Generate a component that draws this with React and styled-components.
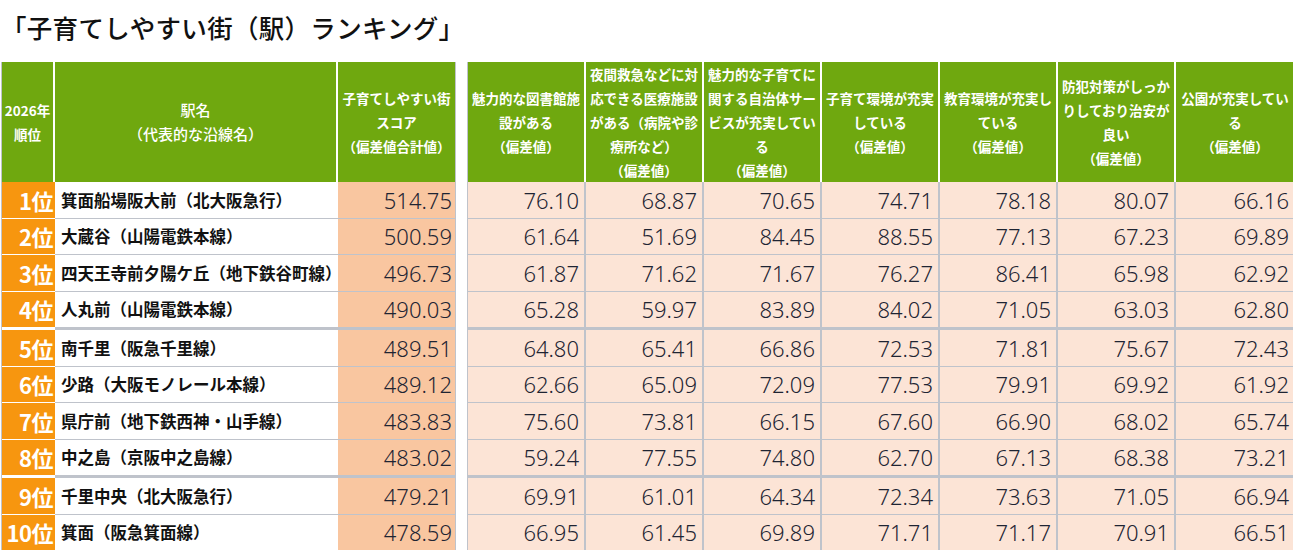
import styled, { createGlobalStyle } from 'styled-components';

const GlobalStyle = createGlobalStyle`
  body {
    margin: 0;
    background: #fff;
    font-family: "Noto Sans CJK JP", "Noto Sans", sans-serif;
  }
`;

const GREEN = '#6FA80F';
const ORANGE = '#F7960F';
const SCORE_BG = '#F9C6A0';
const CELL_BG = '#FCE4D6';
const LINE = '#BFC3CB';

const Page = styled.div`
  width: 1293px;
  padding-left: 1px;
`;

const Title = styled.h1`
  margin: 0;
  height: 62px;
  font-size: 25.5px;
  font-weight: 500;
  line-height: 54px;
  letter-spacing: 0.3px;
  color: #111;
`;

const Tables = styled.div`
  display: flex;
  gap: 11px;
  align-items: flex-start;
`;

const Table = styled.div`
  display: grid;
  grid-template-columns: ${(p) => p.$cols};
  border-left: 1px solid ${LINE};
  border-right: 1px solid ${LINE};
`;

const HeadCell = styled.div`
  box-sizing: border-box;
  height: 120px;
  background: ${GREEN};
  color: #fff;
  display: flex;
  flex-direction: column;
  align-items: center;
  justify-content: center;
  text-align: center;
  font-size: ${(p) => p.$size || 13.5}px;
  font-weight: ${(p) => p.$weight || 700};
  line-height: 24px;
  white-space: nowrap;
  border-right: ${(p) => (p.$last ? 'none' : '2px solid #fff')};
`;

const Cell = styled.div`
  box-sizing: border-box;
  height: ${(p) => (p.$thick ? 38.5 : 36.5)}px;
  border-bottom: ${(p) => (p.$thick ? 3 : 1)}px solid ${LINE};
  display: flex;
  align-items: center;
  white-space: nowrap;
`;

const RankCell = styled(Cell)`
  background: ${ORANGE};
  border-bottom-color: #fff;
  justify-content: flex-end;
  padding-right: 2px;
  color: #fff;
  font-size: 22px;
  font-weight: 700;
  letter-spacing: -0.5px;
`;

const NameCell = styled(Cell)`
  background: #fff;
  padding-left: 6px;
  font-size: 16.5px;
  font-weight: 700;
  color: #111;
`;

const NumCell = styled(Cell)`
  background: ${(p) => (p.$score ? SCORE_BG : CELL_BG)};
  justify-content: flex-end;
  padding-right: ${(p) => (p.$score ? 3 : 5)}px;
  font-family: "Noto Sans", sans-serif;
  font-size: 22px;
  font-weight: 300;
  color: #1e2433;
  border-right: ${(p) => (p.$last || p.$score ? 'none' : `2px solid ${LINE}`)};
`;

const leftHeads = [
  { lines: ['2026年', '順位'], size: 13.5 },
  { lines: ['駅名', '（代表的な沿線名）'], size: 15, weight: 500 },
  { lines: ['子育てしやすい街', 'スコア', '（偏差値合計値）'], size: 13.5 },
];

const rightHeads = [
  ['魅力的な図書館施', '設がある', '（偏差値）'],
  ['夜間救急などに対', '応できる医療施設', 'がある（病院や診', '療所など）', '（偏差値）'],
  ['魅力的な子育てに', '関する自治体サー', 'ビスが充実してい', 'る', '（偏差値）'],
  ['子育て環境が充実', 'している', '（偏差値）'],
  ['教育環境が充実し', 'ている', '（偏差値）'],
  ['防犯対策がしっか', 'りしており治安が', '良い', '（偏差値）'],
  ['公園が充実してい', 'る', '（偏差値）'],
];

const rows = [
  ['箕面船場阪大前（北大阪急行）', '514.75', ['76.10', '68.87', '70.65', '74.71', '78.18', '80.07', '66.16']],
  ['大蔵谷（山陽電鉄本線）', '500.59', ['61.64', '51.69', '84.45', '88.55', '77.13', '67.23', '69.89']],
  ['四天王寺前夕陽ケ丘（地下鉄谷町線）', '496.73', ['61.87', '71.62', '71.67', '76.27', '86.41', '65.98', '62.92']],
  ['人丸前（山陽電鉄本線）', '490.03', ['65.28', '59.97', '83.89', '84.02', '71.05', '63.03', '62.80']],
  ['南千里（阪急千里線）', '489.51', ['64.80', '65.41', '66.86', '72.53', '71.81', '75.67', '72.43']],
  ['少路（大阪モノレール本線）', '489.12', ['62.66', '65.09', '72.09', '77.53', '79.91', '69.92', '61.92']],
  ['県庁前（地下鉄西神・山手線）', '483.83', ['75.60', '73.81', '66.15', '67.60', '66.90', '68.02', '65.74']],
  ['中之島（京阪中之島線）', '483.02', ['59.24', '77.55', '74.80', '62.70', '67.13', '68.38', '73.21']],
  ['千里中央（北大阪急行）', '479.21', ['69.91', '61.01', '64.34', '72.34', '73.63', '71.05', '66.94']],
  ['箕面（阪急箕面線）', '478.59', ['66.95', '61.45', '69.89', '71.71', '71.17', '70.91', '66.51']],
];

// thick separator under the 4th and 8th rows
const isThick = (i) => i === 3 || i === 7;

function App() {
  return (
    <Page>
      <GlobalStyle />
      <Title>「子育てしやすい街（駅）ランキング」</Title>
      <Tables>
        <Table $cols="53px 283px 117px">
          {leftHeads.map((h, i) => (
            <HeadCell key={i} $size={h.size} $weight={h.weight} $last={i === 2}>
              {h.lines.map((l) => (
                <span key={l}>{l}</span>
              ))}
            </HeadCell>
          ))}
          {rows.map((r, i) => [
            <RankCell key={`r${i}`} $thick={isThick(i)}>{i + 1}位</RankCell>,
            <NameCell key={`n${i}`} $thick={isThick(i)}>{r[0]}</NameCell>,
            <NumCell key={`s${i}`} $thick={isThick(i)} $score>{r[1]}</NumCell>,
          ])}
        </Table>
        <Table $cols="repeat(7, 118px)">
          {rightHeads.map((lines, i) => (
            <HeadCell key={i} $last={i === 6}>
              {lines.map((l) => (
                <span key={l}>{l}</span>
              ))}
            </HeadCell>
          ))}
          {rows.map((r, i) =>
            r[2].map((v, j) => (
              <NumCell key={`${i}-${j}`} $thick={isThick(i)} $last={j === 6}>
                {v}
              </NumCell>
            ))
          )}
        </Table>
      </Tables>
    </Page>
  );
}

export default App;
